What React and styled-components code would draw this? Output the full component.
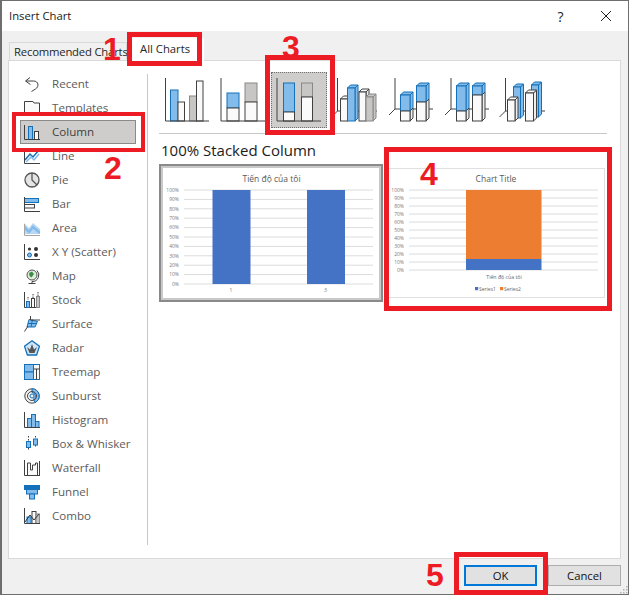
import styled, { createGlobalStyle } from 'styled-components';

const BLUE = '#83bbeb';
const BLUE_LINE = '#1470b8';
const DARK = '#404040';
const GREY = '#c8c6c4';
const GREY_LINE = '#8a8886';

const GlobalStyle = createGlobalStyle`
    html, body {
        margin: 0;
        padding: 0;
        background: #f0f0f0;
    }
    body {
        font-family: "Open Sans", "Noto Sans", "Liberation Sans", sans-serif;
        font-size: 11.3px;
    }
`;

const Shell = styled.div`
    position: relative;
    width: 629px;
    height: 595px;
    overflow: hidden;
`;

const Window = styled.div`
    box-sizing: border-box;
    display: flex;
    flex-direction: column;
    width: 100%;
    height: 100%;
    background: #f0f0f0;
    border: 1px solid #6e6e6e;
    border-left-width: 2px;
`;

const TitleBar = styled.div`
    flex: none;
    display: flex;
    align-items: center;
    height: 30px;
    padding-left: 7px;
    background: #fff;
    color: #1a1a1a;
`;

const TitleText = styled.span`
    flex: 1;
    margin-top: -2px;
`;

const TitleAction = styled.span`
    display: flex;
    justify-content: center;
    width: 45px;
    color: #222;
    font-size: ${(p) => p.$size || 14}px;
`;

const TabBar = styled.div`
    flex: none;
    display: flex;
    align-items: flex-end;
    height: 29px;
    padding-left: 7px;
`;

const Tab = styled.div`
    box-sizing: border-box;
    position: relative;
    display: flex;
    align-items: center;
    color: #262626;
    white-space: nowrap;
    ${(p) =>
        p.$active
            ? `
        height: 23px;
        margin-bottom: -1px;
        padding: 0 14px 2px 13px;
        background: #fff;
    `
            : `
        width: 118px;
        height: 18px;
        padding-left: 4px;
        letter-spacing: -0.2px;
        background: #f0f0f0;
        border: 1px solid #d9d9d9;
        border-bottom: 0;
    `}
`;

const Panel = styled.div`
    flex: 1;
    display: flex;
    min-height: 0;
    margin: 0 7px 0 6px;
    padding: 13px 0;
    background: #fff;
    border: 1px solid #d9d9d9;
`;

const Sidebar = styled.div`
    box-sizing: border-box;
    flex: none;
    width: 139px;
    border-right: 1px solid #c8c8c8;
`;

const TypeList = styled.div`
    display: flex;
    flex-direction: column;
    margin: -2px 0 0 11px;
    width: 116px;
`;

const TypeRow = styled.div`
    box-sizing: border-box;
    display: flex;
    align-items: center;
    gap: 12px;
    height: 24px;
    padding-left: 3px;
    font-size: 11.6px;
    color: ${(p) => (p.$selected ? '#3f3f3f' : '#5c5c5c')};
    background: ${(p) => (p.$selected ? '#cecdcb' : 'transparent')};
    border: 1px solid ${(p) => (p.$selected ? '#8a8a8a' : 'transparent')};
    white-space: nowrap;
`;

const TypeName = styled.span`
    margin-top: -2px;
`;

const TypeIcon = styled.svg`
    flex: none;
    width: 16px;
    height: 16px;
`;

const Main = styled.div`
    flex: 1;
    min-width: 0;
    display: flex;
    flex-direction: column;
    padding-left: 11px;
`;

const Gallery = styled.div`
    display: flex;
    margin-top: -2px;
    height: 61px;
    width: 448px;
    border-bottom: 1px solid #c8c8c8;
`;

const GalleryItem = styled.div`
    box-sizing: border-box;
    flex: none;
    width: 56px;
    height: 56px;
    background: ${(p) => (p.$selected ? '#cecdcb' : 'transparent')};
    border: 1px dotted ${(p) => (p.$selected ? '#6f6f6f' : 'transparent')};
`;

const GallerySvg = styled.svg`
    display: block;
    width: 56px;
    height: 56px;
    margin: -1px;
`;

const Heading = styled.div`
    margin: 5px 0 0 2px;
    height: 25px;
    font-size: 15px;
    line-height: 23px;
    color: #1c1c1c;
`;

const Previews = styled.div`
    display: flex;
    align-items: center;
    gap: 5px;
`;

const Preview = styled.div`
    box-sizing: border-box;
    flex: none;
    line-height: 0;
    ${(p) =>
        p.$selected
            ? `
        padding: 2px;
        background: #c9c9c9;
        border: 2px solid #8a8a8a;
    `
            : `
        background: #fff;
        border: 1px solid #e0e0e0;
    `}
`;

const PreviewChart = styled.svg`
    display: block;
    background: #fff;
`;

const Footer = styled.div`
    box-sizing: border-box;
    flex: none;
    display: flex;
    justify-content: flex-end;
    gap: 11px;
    height: 35px;
    padding: 6px 7px 0 0;
`;

const Button = styled.div`
    box-sizing: border-box;
    display: flex;
    align-items: center;
    justify-content: center;
    width: 73px;
    height: 21px;
    padding-bottom: 1px;
    color: #111;
    background: #e1e1e1;
    border: ${(p) => (p.$primary ? '2px solid #0078d7' : '1px solid #adadad')};
`;

const Grip = styled.svg`
    position: absolute;
    right: 1px;
    bottom: 1px;
    width: 8px;
    height: 8px;
`;

// red marks somebody drew on top of the screenshot
const Mark = styled.div`
    position: absolute;
    box-sizing: border-box;
    left: ${(p) => p.$x}px;
    top: ${(p) => p.$y}px;
    width: ${(p) => p.$w}px;
    height: ${(p) => p.$h}px;
    border: ${(p) => p.$t || 5}px solid #ed1c24;
`;

const Digit = styled.span`
    position: absolute;
    left: ${(p) => p.$x}px;
    top: ${(p) => p.$y}px;
    color: #ed1c24;
    font-family: "Liberation Sans", Arial, sans-serif;
    font-size: 32px;
    font-weight: 700;
    line-height: 1;
`;

const Axes = ({ x = 6, y = 6, right = 50, bottom = 49 }) => (
    <path d={`M${x} ${y}V${bottom}H${right}`} fill="none" stroke={DARK} strokeWidth="1" />
);

const Seg = ({ x, y, w, h, kind }) => {
    const colors = {
        blue: [BLUE, BLUE_LINE],
        grey: [GREY, GREY_LINE],
        white: ['#fafafa', DARK],
    }[kind];
    return <rect x={x} y={y} width={w} height={h} fill={colors[0]} stroke={colors[1]} />;
};

// one 3D column: stacked segments from the top down
const Bar3D = ({ x, w, parts, depth = 3 }) => {
    const top = parts[0][1];
    const head = { blue: [BLUE, BLUE_LINE], grey: [GREY, GREY_LINE], white: ['#fafafa', DARK] }[parts[0][0]];
    return (
        <g>
            {parts.map(([kind, y1, y2]) => {
                const c = { blue: [BLUE, BLUE_LINE], grey: [GREY, GREY_LINE], white: ['#eee', DARK] }[kind];
                return (
                    <path
                        key={y1}
                        d={`M${x + w} ${y1}l${depth} -${depth}V${y2 - depth}l-${depth} ${depth}Z`}
                        fill={c[0]}
                        stroke={c[1]}
                    />
                );
            })}
            <path d={`M${x} ${top}l${depth} -${depth}h${w}l-${depth} ${depth}Z`} fill={head[0]} stroke={head[1]} />
            {parts.map(([kind, y1, y2]) => (
                <Seg key={y1} x={x} y={y1} w={w} h={y2 - y1} kind={kind} />
            ))}
        </g>
    );
};

const Axes3D = ({ x, base, right = 50 }) => (
    <path d={`M${x} 6V${base}H${right}M${x} ${base}L${x - 6} ${base + 6}`} fill="none" stroke={DARK} />
);

const galleryIcons = [
    <>
        <Seg x={11.5} y={18} w={7.5} h={31} kind="blue" />
        <Seg x={19} y={30} w={6.5} h={19} kind="white" />
        <Seg x={30.5} y={24} w={7} h={25} kind="grey" />
        <Seg x={37.5} y={9} w={6.5} h={40} kind="white" />
        <Axes x={6.5} right={50} />
    </>,
    <>
        <Seg x={12} y={21} w={12} h={15} kind="blue" />
        <Seg x={12} y={36} w={12} h={13} kind="white" />
        <Seg x={30} y={11} w={12} h={19} kind="grey" />
        <Seg x={30} y={30} w={12} h={19} kind="white" />
        <Axes />
    </>,
    <>
        <Seg x={12.5} y={11} w={11} h={29} kind="blue" />
        <Seg x={12.5} y={40} w={11} h={9} kind="white" />
        <Seg x={30.5} y={11} w={11} h={14} kind="grey" />
        <Seg x={30.5} y={25} w={11} h={24} kind="white" />
        <Axes />
    </>,
    <>
        <Axes3D x={10.5} base={39} />
        <Bar3D x={13.5} w={7} parts={[['white', 27, 49]]} />
        <Bar3D x={20.5} w={7.5} parts={[['blue', 16, 49]]} />
        <Bar3D x={32} w={7} parts={[['white', 20, 49]]} />
        <Bar3D x={39} w={7} parts={[['grey', 25, 49]]} />
    </>,
    <>
        <Axes3D x={12} base={37} />
        <Bar3D x={17.5} w={9.5} parts={[['blue', 23, 39], ['white', 39, 49]]} />
        <Bar3D x={33.5} w={9.5} parts={[['blue', 14, 30], ['white', 30, 49]]} />
    </>,
    <>
        <Axes3D x={12} base={37} />
        <Bar3D x={17.5} w={9.5} parts={[['blue', 14, 39], ['white', 39, 49]]} />
        <Bar3D x={33.5} w={9.5} parts={[['blue', 14, 23], ['white', 23, 49]]} />
    </>,
    <>
        <Axes3D x={10.5} base={39} />
        <Bar3D x={18.5} w={7} parts={[['blue', 15, 46]]} />
        <Bar3D x={36.5} w={7} parts={[['blue', 13, 45]]} />
        <Bar3D x={12.5} w={7.5} parts={[['white', 28, 49]]} />
        <Bar3D x={30.5} w={8} parts={[['white', 21, 49]]} />
    </>,
];

const line = { fill: 'none', stroke: DARK };
const blue = { fill: BLUE, stroke: BLUE_LINE };
const grey = { fill: GREY, stroke: GREY_LINE };
const white = { fill: '#fafafa', stroke: DARK };

const chartTypes = [
    {
        name: 'Recent',
        icon: <path d="M6 1.5L1.5 5L6.5 8.5M2 5H9.5C14.5 5 15.5 10.5 11.5 13L7.5 15.5" {...line} />,
    },
    {
        name: 'Templates',
        icon: <path d="M.5 15.5V1.5H9L10 3H15.5V15.5Z" fill="#fafafa" stroke={DARK} />,
    },
    {
        name: 'Column',
        icon: (
            <>
                <rect x="4.5" y="2.5" width="4" height="13" {...blue} />
                <rect x="10.5" y="7.5" width="4" height="8" {...white} />
                <path d="M.5 1V15.5H16" {...line} />
            </>
        ),
    },
    {
        name: 'Line',
        icon: (
            <>
                <path d="M1 12L6 6L9 9L15 2" fill="none" stroke={BLUE_LINE} strokeWidth="1.5" />
                <path d="M2 14L7 9L10 12L15 6" fill="none" stroke={BLUE} strokeWidth="1.5" />
                <path d="M.5 1V15.5H16" {...line} />
            </>
        ),
    },
    {
        name: 'Pie',
        icon: (
            <>
                <circle cx="8" cy="8" r="7" fill="#e4e4e4" stroke="#555" strokeWidth="1.3" />
                <path d="M8 1V8L13 13" fill="none" stroke="#555" strokeWidth="1.3" />
            </>
        ),
    },
    {
        name: 'Bar',
        icon: (
            <>
                <rect x=".5" y="2.5" width="14" height="4" {...blue} />
                <rect x=".5" y="8.5" width="10" height="3.5" {...white} />
                <path d="M.5 1V15.5H16" {...line} />
            </>
        ),
    },
    {
        name: 'Area',
        icon: (
            <>
                <path d="M0 14V3L5 8L9 3L16 9V14Z" fill="#b7d7f2" />
                <path d="M0 7L5 12L9 7L16 13" fill="none" stroke={BLUE} strokeWidth="2.5" />
                <path d="M.5 4V15.5H16" fill="none" stroke="#a6a6a6" />
            </>
        ),
    },
    {
        name: 'X Y (Scatter)',
        icon: (
            <>
                <path d="M.5 0V15.5H16" {...line} />
                <circle cx="5.5" cy="5" r="1.6" fill="#333" />
                <circle cx="12" cy="5" r="2" fill="#333" />
                <circle cx="5.5" cy="11" r="2" {...blue} />
                <circle cx="12" cy="11" r="2" fill="#333" />
            </>
        ),
    },
    {
        name: 'Map',
        icon: (
            <>
                <circle cx="8" cy="7" r="5" fill="#dfeee0" stroke="#555" />
                <path d="M5 5L8 3.5L10 6L7.5 9.5L5.5 8Z" fill="#3e8e41" />
                <path d="M13 2.5A6.5 6.5 0 0 1 8 13.5M8 13.5V15M4.5 15.5H11.5" {...line} />
            </>
        ),
    },
    {
        name: 'Stock',
        icon: (
            <>
                <path d="M.5 0V15.5H16" {...line} />
                <path d="M4 5V8M9 2V6M14 0V4" stroke={DARK} strokeDasharray="1.5 1" />
                <rect x="2.5" y="9.5" width="3" height="6" {...blue} />
                <rect x="7.5" y="6.5" width="3" height="9" {...white} />
                <rect x="12.5" y="4.5" width="3" height="11" {...grey} />
            </>
        ),
    },
    {
        name: 'Surface',
        icon: (
            <>
                <path d="M5 3.5L3 11H11L13.5 5.5Z" {...blue} />
                <path d="M8.5 3.5L7 11M4 7.5H12.5" fill="none" stroke={BLUE_LINE} />
                <path d="M6.5 0V4H16M4 10L.5 15.5" {...line} />
            </>
        ),
    },
    {
        name: 'Radar',
        icon: (
            <>
                <path d="M8 .8L15.5 6.3L12.6 15H3.4L.5 6.3Z" fill="#cfe5f8" stroke={BLUE_LINE} strokeWidth="1.3" />
                <path d="M8 4L10 9.5L13 7L10.5 13H5.5L3 7L6 9.5Z" fill="#555" />
            </>
        ),
    },
    {
        name: 'Treemap',
        icon: (
            <>
                <rect x=".5" y=".5" width="15" height="15" fill="#fafafa" stroke={BLUE_LINE} />
                <rect x=".5" y=".5" width="9" height="7.5" {...blue} />
                <rect x=".5" y="8" width="9" height="7.5" {...blue} />
                <path d="M9.5 5H15.5M12.5 5V15.5" {...line} />
            </>
        ),
    },
    {
        name: 'Sunburst',
        icon: (
            <>
                <circle cx="8" cy="8" r="7.2" fill="#f4f4f4" stroke="#444" />
                <path d="M8 .8A7.2 7.2 0 0 1 11 14.5L9.5 11A3.5 3.5 0 0 0 8 4.5Z" {...blue} />
                <circle cx="8" cy="8" r="4.5" fill="none" stroke="#444" />
                <circle cx="8" cy="8" r="2" fill="none" stroke={BLUE_LINE} />
            </>
        ),
    },
    {
        name: 'Histogram',
        icon: (
            <>
                <rect x="3.5" y="6.5" width="4" height="9" {...blue} />
                <rect x="7.5" y="2.5" width="4" height="13" {...blue} />
                <rect x="11.5" y="9.5" width="3.5" height="6" {...blue} />
                <path d="M.5 0V15.5H16" {...line} />
            </>
        ),
    },
    {
        name: 'Box & Whisker',
        icon: (
            <>
                <path d="M4.5 0V15M11.5 0V12" stroke={DARK} strokeDasharray="1.5 1.5" />
                <rect x="2.5" y="5.5" width="4" height="6" {...blue} />
                <rect x="9.5" y="3" width="4" height="6" {...blue} />
            </>
        ),
    },
    {
        name: 'Waterfall',
        icon: (
            <>
                <path d="M3.5 15V3H6.5V10H8.5V5H11.5V3H13.5V15" fill="#fafafa" stroke={DARK} />
                <path d="M.5 0V15.5H16M15.5 1V15" {...line} />
            </>
        ),
    },
    {
        name: 'Funnel',
        icon: (
            <>
                <rect x=".5" y="1.5" width="15" height="4" fill={BLUE_LINE} stroke={BLUE_LINE} />
                <rect x="2.5" y="5.5" width="11" height="4.5" {...blue} />
                <rect x="5.5" y="10" width="5" height="5" {...blue} />
            </>
        ),
    },
    {
        name: 'Combo',
        icon: (
            <>
                <rect x="3" y="9" width="4" height="6.5" fill={BLUE} stroke={BLUE_LINE} />
                <rect x="8" y="3.5" width="4" height="12" {...white} />
                <rect x="12" y="6" width="3.5" height="9.5" {...grey} />
                <path d="M1 14L6 7L10 12L15 6" fill="none" stroke="#333" />
                <path d="M.5 0V15.5H16" {...line} />
            </>
        ),
    },
];

const PERCENTS = [100, 90, 80, 70, 60, 50, 40, 30, 20, 10, 0];

const Grid = ({ x1, x2, top, step, labelX }) =>
    PERCENTS.map((p, i) => (
        <g key={p}>
            <line x1={x1} x2={x2} y1={top + i * step} y2={top + i * step} stroke="#dcdcdc" />
            <text x={labelX} y={top + i * step + 1.7} textAnchor="end" fontSize="5" fill="#7a7a7a">
                {p}%
            </text>
        </g>
    ));

const App = () => {
    return (
        <Shell>
            <GlobalStyle />
            <Window>
                <TitleBar>
                    <TitleText>Insert Chart</TitleText>
                    <TitleAction $size={14}>?</TitleAction>
                    <TitleAction>
                        <svg width="12" height="12" viewBox="0 0 12 12">
                            <path d="M1 1L11 11M11 1L1 11" stroke="#222" fill="none" />
                        </svg>
                    </TitleAction>
                </TitleBar>
                <TabBar>
                    <Tab>Recommended Charts</Tab>
                    <Tab $active>All Charts</Tab>
                </TabBar>
                <Panel>
                    <Sidebar>
                        <TypeList>
                            {chartTypes.map((type) => (
                                <TypeRow key={type.name} $selected={type.name === 'Column'}>
                                    <TypeIcon viewBox="0 0 16 16">{type.icon}</TypeIcon>
                                    <TypeName>{type.name}</TypeName>
                                </TypeRow>
                            ))}
                        </TypeList>
                    </Sidebar>
                    <Main>
                        <Gallery>
                            {galleryIcons.map((icon, i) => (
                                <GalleryItem key={i} $selected={i === 2}>
                                    <GallerySvg viewBox="0 0 56 56">{icon}</GallerySvg>
                                </GalleryItem>
                            ))}
                        </Gallery>
                        <Heading>100% Stacked Column</Heading>
                        <Previews>
                            <Preview $selected>
                                <PreviewChart width="216" height="130" viewBox="163 169 216 130">
                                    <text x="271.5" y="182.5" textAnchor="middle" fontSize="8.5" fill="#595959">
                                        Tiến độ của tôi
                                    </text>
                                    <Grid x1={184} x2={373} top={191} step={9.4} labelX={179} />
                                    <rect x="212.5" y="191" width="38" height="94" fill="#4472c4" />
                                    <rect x="307" y="191" width="38" height="94" fill="#4472c4" />
                                    <text x="231" y="293" textAnchor="middle" fontSize="5" fill="#7a7a7a">1</text>
                                    <text x="325.5" y="293" textAnchor="middle" fontSize="5" fill="#7a7a7a">3</text>
                                </PreviewChart>
                            </Preview>
                            <Preview>
                                <PreviewChart width="215" height="128" viewBox="389 170 215 128">
                                    <text x="496" y="182.5" textAnchor="middle" fontSize="8.5" fill="#595959">
                                        Chart Title
                                    </text>
                                    <Grid x1={409} x2={598} top={191} step={8} labelX={404} />
                                    <rect x="466" y="191" width="75.5" height="69" fill="#ed7d31" />
                                    <rect x="466" y="260" width="75.5" height="11" fill="#4472c4" />
                                    <text x="504" y="280" textAnchor="middle" fontSize="5.2" fill="#666">
                                        Tiến độ của tôi
                                    </text>
                                    <rect x="475" y="288" width="3.2" height="3.2" fill="#4472c4" />
                                    <text x="479" y="291.7" fontSize="5" fill="#666">Series1</text>
                                    <rect x="500" y="288" width="3.2" height="3.2" fill="#ed7d31" />
                                    <text x="504" y="291.7" fontSize="5" fill="#666">Series2</text>
                                </PreviewChart>
                            </Preview>
                        </Previews>
                    </Main>
                </Panel>
                <Footer>
                    <Button $primary>OK</Button>
                    <Button>Cancel</Button>
                </Footer>
            </Window>
            <Grip viewBox="0 0 8 8">
                <path d="M6 0h1.5v1.5H6zM3 3h1.5v1.5H3zM6 3h1.5v1.5H6zM0 6h1.5v1.5H0zM3 6h1.5v1.5H3zM6 6h1.5v1.5H6z" fill="#b4b4b4" />
            </Grip>
            <Digit $x={103} $y={33}>1</Digit>
            <Digit $x={104} $y={152}>2</Digit>
            <Digit $x={282} $y={31}>3</Digit>
            <Digit $x={420} $y={158}>4</Digit>
            <Digit $x={426} $y={559}>5</Digit>
            <Mark $x={127} $y={32} $w={75} $h={34} />
            <Mark $x={12} $y={112} $w={133} $h={40} $t={4} />
            <Mark $x={265} $y={55} $w={70} $h={80} />
            <Mark $x={384} $y={147} $w={228} $h={164} />
            <Mark $x={454} $y={552} $w={94} $h={43} />
        </Shell>
    );
};

export default App;
